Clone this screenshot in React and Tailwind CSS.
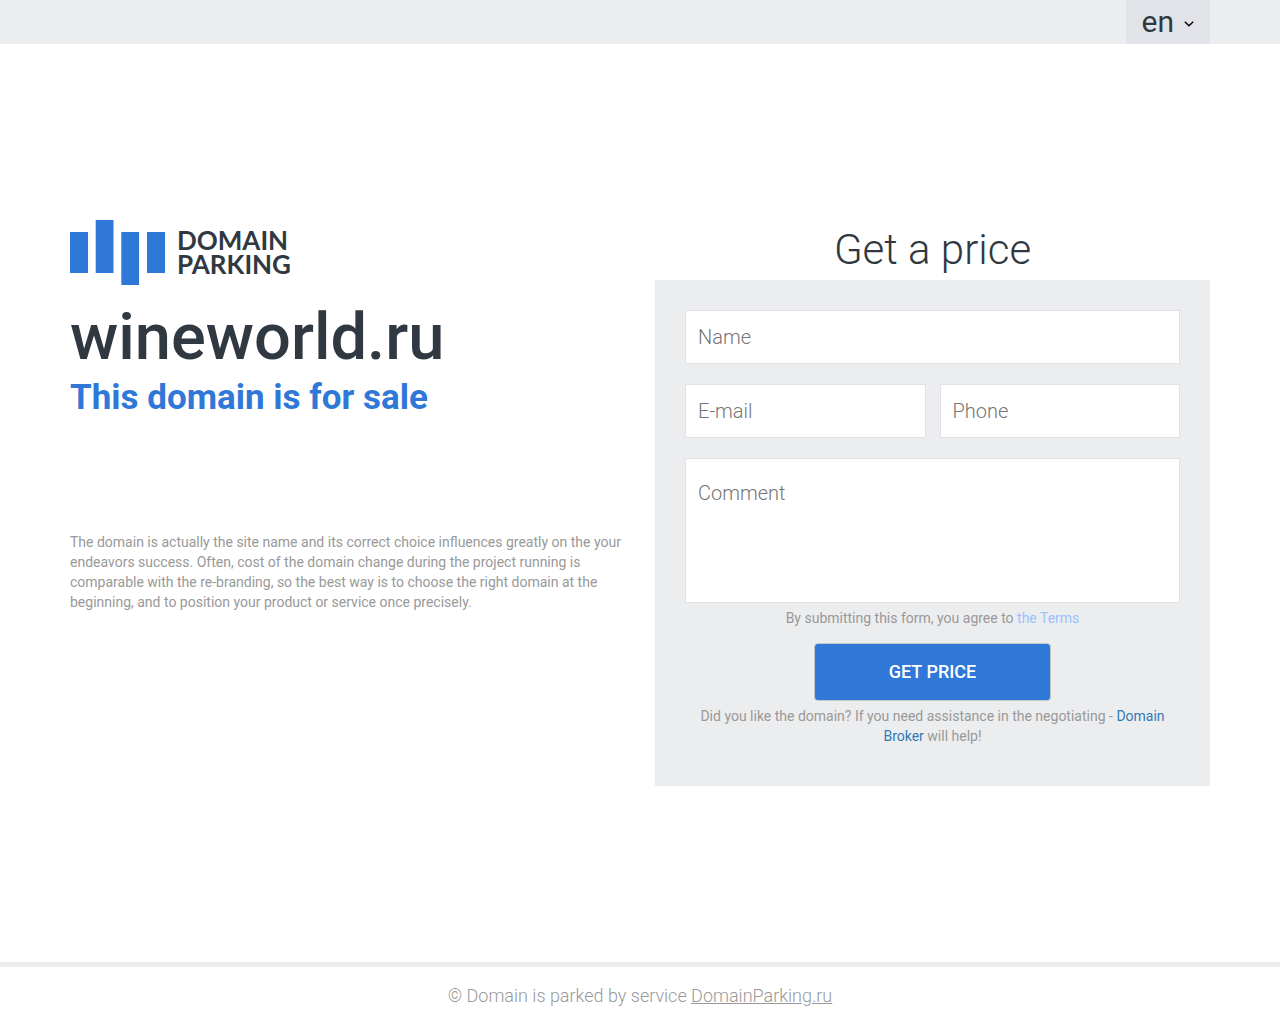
function Logo() {
  return (
    <a href="#" aria-label="Domain Parking" className="flex h-[65px] items-start gap-3 self-start text-[#303841]">
      <svg width="95" height="65" viewBox="0 0 95 65" fill="#2f78d8" aria-hidden="true">
        <path d="M0 12h18v41H0zM25.7 0h17.8v53H25.7zM51.3 12h17.8v53H51.3zM77 12h18v41H77z" />
      </svg>
      <span className="flex flex-col pt-2 font-['Lato',sans-serif] text-[26px] leading-6 font-bold">
        <span>DOMAIN</span>
        <span>PARKING</span>
      </span>
    </a>
  );
}

const field =
  "block w-full min-w-0 border border-[#e1e2e5] bg-white px-3 text-xl font-light text-[#303841] placeholder:text-[#757575] outline-none focus:border-[#2f78d8]";

export default function App() {
  return (
    <div className="flex min-h-screen flex-col bg-white font-['Roboto',sans-serif] text-sm leading-5 text-[#999999]">
      <header className="bg-[#ecedef]">
        <div className="mx-auto flex max-w-[1170px] justify-end px-[15px]">
          <button type="button" aria-label="Language: en" className="flex h-11 items-center gap-2.5 bg-[#e2e2e9] px-4 text-3xl text-[#303841]">
            <span>en</span>
            <svg width="10" height="6" viewBox="0 0 10 6" fill="none" stroke="#000" strokeWidth="1.4" className="mt-1" aria-hidden="true">
              <path d="M.8.8 5 4.8 9.2.8" />
            </svg>
          </button>
        </div>
      </header>

      <main className="mx-auto grid w-full max-w-[1170px] grow content-center gap-[30px] px-[15px] md:grid-cols-2">
        <section className="flex flex-col">
          <Logo />
          <h1 className="mt-4 text-[65px] leading-[72px] font-medium text-[#303841]">wineworld.ru</h1>
          <h2 className="mt-[5px] text-[35px] leading-10 font-bold text-[#2f78d8]">This domain is for sale</h2>
          <p className="mt-[114px]">
            The domain is actually the site name and its correct choice influences greatly on the your endeavors
            success. Often, cost of the domain change during the project running is comparable with the re-branding,
            so the best way is to choose the right domain at the beginning, and to position your product or service
            once precisely.
          </p>
        </section>

        <section className="text-center">
          <h2 className="text-[42px] leading-[60px] font-light text-[#303841]">Get a price</h2>
          <form className="bg-[#ecedef] px-[30px] pt-[30px] pb-10" onSubmit={(e) => e.preventDefault()}>
            <div className="flex flex-col gap-5">
              <input type="text" name="name" aria-label="Name" placeholder="Name" className={`${field} h-[54px]`} />
              <div className="grid grid-cols-2 gap-[14px]">
                <input type="email" name="email" aria-label="E-mail" placeholder="E-mail" className={`${field} h-[54px]`} />
                <input type="tel" name="phone" aria-label="Phone" placeholder="Phone" className={`${field} h-[54px]`} />
              </div>
              <textarea name="comment" aria-label="Comment" placeholder="Comment" className={`${field} h-[145px] resize-none py-5`} />
            </div>
            <p className="mt-[5px]">
              By submitting this form, you agree to <a href="#terms" className="text-[#99c2ff]">the Terms</a>
            </p>
            <button type="submit" className="mx-auto mt-[15px] block h-[58px] w-[237px] rounded border border-[#c4c8ce] bg-[#2f78d8] text-lg font-medium text-white">
              GET PRICE
            </button>
            <p className="mt-[5px]">
              Did you like the domain? If you need assistance in the negotiating -{" "}
              <a href="#broker" className="text-[#337ab7]">Domain Broker</a> will help!
            </p>
          </form>
        </section>
      </main>

      <footer className="border-t-[5px] border-[#ecedef] px-4 py-[14px] text-center text-lg leading-[29px] font-light">
        © Domain is parked by service <a href="#service" className="underline">DomainParking.ru</a>
      </footer>
    </div>
  );
}
